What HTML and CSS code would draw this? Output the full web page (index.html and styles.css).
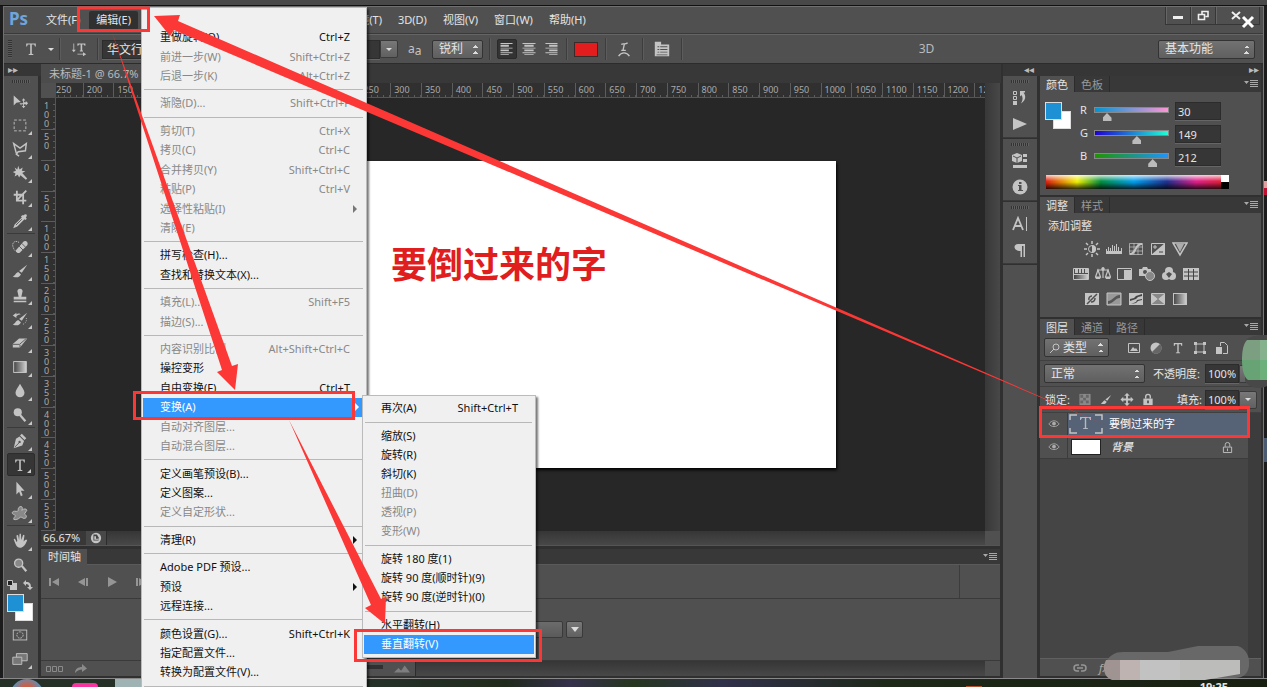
FILE: index.html
```html
<!DOCTYPE html>
<html lang="zh-CN">
<head>
<meta charset="utf-8">
<title>未标题-1 @ 66.7%</title>
<link rel="stylesheet" href="styles.css">
</head>
<body>
<svg class="defs" aria-hidden="true">
  <defs>
    <linearGradient id="fade"><stop offset="0" stop-color="#444"/><stop offset="1" stop-color="#d0d0d0"/></linearGradient>
    <symbol id="move" viewBox="0 0 20 20"><path d="M3 4v11l3-3 5-1z"/><path d="M14 7l2 2.500h-1.500v2h2v-1.500l2.500 2.500-2.500 2.500v-1.500h-2v2H16l-2 2.500-2-2.500h1.500v-2h-2V15L9.500 12.500h4v-3H12z"/></symbol>
    <symbol id="marquee" viewBox="0 0 20 20"><rect class="ln" x="3.500" y="4.500" width="13" height="12" stroke-dasharray="3 2"/></symbol>
    <symbol id="lasso" viewBox="0 0 20 20"><path class="ln" stroke-width="1.600" d="M6 15L3 4l7 5 7-5-1 8-8 1-2 3 3 2"/></symbol>
    <symbol id="wand" viewBox="0 0 20 20"><path d="M8 2l1.500 4L13 4l-1 3.500 4 .5-3.500 2L18 16l-1.500 1.500-6-5L9 15l-1.500-3L4 14l1-3.500L2 9l3.500-1.500L4 4l3 2z"/></symbol>
    <symbol id="crop" viewBox="0 0 20 20"><path class="ln" stroke-width="2" d="M6.500 3v11H17M3 7.500h10.500V18M6 14l11-11"/></symbol>
    <symbol id="dropper" viewBox="0 0 20 20"><path d="M11 5l1 1-8 8-1.500 4L7 16l8-8 1 1 1.500-1.500-1-1.500C19 4 17 1 14 3.500L12.500 3.500z"/><path stroke="#555" d="M5.500 14.500L12 8"/></symbol>
    <symbol id="heal" viewBox="0 0 20 20"><path class="ln" stroke-dasharray="1.500 1" d="M9 5C5 2 1 5 2 9s3 7 6 5"/><path d="M6 13l8-9c2-2 6 1 4 4l-8 8c-2 2-6-1-4-3z"/><path stroke="#555" stroke-width="1" d="M9 9l5 5M12 6l4 4"/></symbol>
    <symbol id="brush" viewBox="0 0 20 20"><path d="M18 3l-6 9-3-2zM8 11l3 2.500C10 17 6 18 2 16c3-1 3-4 6-5z"/></symbol>
    <symbol id="stamp" viewBox="0 0 20 20"><path d="M10 3a3 3 0 0 1 2.500 4.500L11.500 12H17v3H3v-3h5.500L7.500 7.500A3 3 0 0 1 10 3zM3 16.500h14V18H3z"/></symbol>
    <symbol id="history" viewBox="0 0 20 20"><path d="M18 3l-6 9-3-2zM8 11l3 2.500C10 17 6 18 2 16c3-1 3-4 6-5zM6 3v2c2-2 4-1 5 0-2 0-3 0-5 2v2L2 6z"/><path class="ln" stroke-dasharray="1 1.500" d="M17 9c1 4-2 7-5 7"/></symbol>
    <symbol id="eraser" viewBox="0 0 20 20"><path d="M9 5h9l-8 10H2v-4z"/><path stroke="#555" d="M2 11.500h7.500L17 5M10 12v3"/></symbol>
    <symbol id="gradient" viewBox="0 0 20 20"><rect x="3" y="4" width="14" height="12" fill="url(#fade)" stroke="#d0d0d0"/></symbol>
    <symbol id="drop" viewBox="0 0 20 20"><path d="M10 2c2 4 5 7 5 10a5 5 0 0 1-10 0c0-3 3-6 5-10z"/></symbol>
    <symbol id="dodge" viewBox="0 0 20 20"><circle cx="7.500" cy="7" r="4.500"/><path stroke="#c4c4c4" stroke-width="2.500" d="M10 10l6 7"/></symbol>
    <symbol id="pen" viewBox="0 0 20 20"><path d="M12 2l5 5-2 2-5-5zM9.500 5l5 5-2 5L3 18 5.500 7.500z"/><path stroke="#555" d="M4 17l5-5"/><circle cx="9.500" cy="11" r="1.300" fill="#555"/></symbol>
    <symbol id="type" viewBox="0 0 20 20"><path d="M4 3h12v4h-1l-1-2.500h-3V16l2 .5V17.500H7v-1l2-.5V4.500H6L5 7H4z"/></symbol>
    <symbol id="select" viewBox="0 0 20 20"><path d="M6 2v14l3-3 2 5 2-1-2-5h4z"/></symbol>
    <symbol id="shape" viewBox="0 0 20 20"><path d="M10 3c3-1 3 2 2 4 3-3 7-1 5 1l-2 3c3 2 3 5-1 5-2-1-3-2-4-1-2 2-5 3-7 2 0-3 3-3 1-5-4-1-3-4 0-4 3 0 3 1 4-1 0-2 0-3 2-4z" fill="#888" stroke="#c4c4c4"/></symbol>
    <symbol id="hand" viewBox="0 0 20 20"><path d="M3 8c1-1 2 0 3 3l1-1-1-6c1-1 2-1 2 0l1 5 .5-7h1.500l.5 7 2-6 1.500.5-1 7 2-2h2c-1 4-4 9-8 9S5 13 3 8z"/></symbol>
    <symbol id="lens" viewBox="0 0 20 20"><circle cx="8.500" cy="8" r="4.500" fill="#888" stroke="#c4c4c4" stroke-width="1.500"/><path stroke="#c4c4c4" stroke-width="2.500" d="M12 11l5 6"/></symbol>
    <symbol id="mask" viewBox="0 0 20 20"><rect class="ln" x="2.500" y="4.500" width="15" height="11"/><circle class="ln" cx="10" cy="10" r="3.500" stroke-dasharray="2 1"/></symbol>
    <symbol id="screen" viewBox="0 0 20 20"><path d="M6 4h12v8H6z" fill="#777" stroke="#c4c4c4"/><path d="M2 8h10v8H2z" fill="#777" stroke="#c4c4c4"/></symbol>
    <symbol id="panelmenu" viewBox="0 0 14 10"><path d="M0 2h5L2.500 5zM6 1h8v1H6zM6 3h8v1H6zM6 5h8v1H6zM6 7h8v1H6z"/></symbol>
    <symbol id="eye" viewBox="0 0 14 10"><path class="ln" d="M1 5c3-5 9-5 12 0-3 4-9 4-12 0z"/><circle cx="7" cy="4.500" r="2.200"/></symbol>
    <symbol id="lock" viewBox="0 0 12 14"><path class="ln" stroke-width="1.500" d="M3.500 6V4a2.500 2.500 0 0 1 5 0v2"/><path d="M1 6h10v7H1z"/><path fill="#555" d="M5 8h2v3H5z"/></symbol>
    <symbol id="tri" viewBox="0 0 6 8"><path d="M1 0l4 4-4 4z"/></symbol>
  </defs>
</svg>

<div class="page">
  <div class="backstrip"></div>
  <div class="app">
    <header class="menubar">
      <strong class="logo">Ps</strong>
      <nav class="menus">
        <button>文件(F)</button><button class="open">编辑(E)</button><button>图像(I)</button><button>图层(L)</button><button>文字(Y)</button><button>选择(S)</button><button>滤镜(T)</button><button>3D(D)</button><button>视图(V)</button><button>窗口(W)</button><button>帮助(H)</button>
      </nav>
      <div class="winctl">
        <button aria-label="最小化"><svg viewBox="0 0 12 12"><path d="M1 6h10v3H1z"/></svg></button>
        <button aria-label="还原"><svg viewBox="0 0 12 12"><path class="ln" stroke-width="1.600" d="M5 4V1.500h6v5H8.500M1.500 4.500h6v5h-6z"/></svg></button>
        <button class="close" aria-label="关闭"><svg viewBox="0 0 12 12"><path class="ln" stroke-width="2" d="M2 2l8 7M10 2L2 9"/></svg></button>
      </div>
    </header>

    <div class="options">
      <i class="grip-v"></i>
      <svg class="ic opt-t"><use href="#type"/></svg><i class="down"></i>
      <i class="vsep"></i>
      <svg class="ic opt-o" viewBox="0 0 20 20"><path d="M8 3h10v3h-1l-1-1.500h-2V12h1v1h-4v-1h1V4.500h-2L9 6H8zM3 3h1v8h2l-2.500 3L1 11h2zM8 16h7v-2l4 2.500-4 2.500v-2H8z"/></svg>
      <i class="vsep"></i>
      <input class="dark font" aria-label="字体" value="华文行楷">
      <input class="dark size" aria-label="字号" value="36 点"><button class="dropbtn" aria-label="字号列表"><i class="down"></i></button>
      <span class="aa">a<sub>a</sub></span>
      <select class="sel aasel" aria-label="消除锯齿"><option>锐利</option></select>
      <i class="vsep"></i>
      <button class="align on" aria-label="左对齐"><svg viewBox="0 0 14 14"><path d="M0 0h13v1H0zM0 2h9v2H0zM0 5h13v1H0zM0 7h9v2H0zM0 10h13v1H0zM0 12h9v1H0z"/></svg></button>
      <button class="align" aria-label="居中对齐"><svg viewBox="0 0 14 14"><path d="M0 0h14v1H0zM2 2h10v2H2zM0 5h14v1H0zM2 7h10v2H2zM0 10h14v1H0zM2 12h10v1H2z"/></svg></button>
      <button class="align" aria-label="右对齐"><svg viewBox="0 0 14 14"><path d="M1 0h13v1H1zM5 2h9v2H5zM1 5h13v1H1zM5 7h9v2H5zM1 10h13v1H1zM5 12h9v1H5z"/></svg></button>
      <i class="vsep"></i>
      <button class="redsw" aria-label="文本颜色"></button>
      <i class="vsep"></i>
      <svg class="ic opt-w" viewBox="0 0 20 20"><path class="ln" stroke-width="1.500" d="M7 5c2-2 4 1 7-2M10.500 4L9 11M7 11.500h5M4 18c3-5 9-5 12 0"/></svg>
      <i class="vsep"></i>
      <svg class="ic opt-p" viewBox="0 0 20 20"><path d="M2 2h7v3h9v13H2z"/><path fill="#505050" d="M10 2h8v2h-8zM5 7h2v1H5zM8 7h8v1H8zM5 10h2v1H5zM8 10h8v1H8zM5 13h2v1H5zM8 13h8v1H8zM4 16h12v1H4z"/></svg>
      <i class="vsep"></i>
      <span class="threed">3D</span>
      <select class="sel workspace" aria-label="工作区"><option>基本功能</option></select>
    </div>

    <main class="work">
      <aside class="tools">
        <div class="colhead"><b>▸▸</b></div>
        <i class="grip-h"></i>
        <div class="toolgroup">
          <button aria-label="移动"><svg><use href="#move"/></svg></button><button class="more" aria-label="选框"><svg><use href="#marquee"/></svg></button><button class="more" aria-label="套索"><svg><use href="#lasso"/></svg></button><button class="more" aria-label="魔棒"><svg><use href="#wand"/></svg></button><button class="more" aria-label="裁剪"><svg><use href="#crop"/></svg></button><button class="more" aria-label="吸管"><svg><use href="#dropper"/></svg></button>
        </div>
        <div class="toolgroup">
          <button class="more" aria-label="修复"><svg><use href="#heal"/></svg></button><button class="more" aria-label="画笔"><svg><use href="#brush"/></svg></button><button class="more" aria-label="图章"><svg><use href="#stamp"/></svg></button><button class="more" aria-label="历史画笔"><svg><use href="#history"/></svg></button><button class="more" aria-label="橡皮擦"><svg><use href="#eraser"/></svg></button><button class="more" aria-label="渐变"><svg><use href="#gradient"/></svg></button><button class="more" aria-label="模糊"><svg><use href="#drop"/></svg></button><button class="more" aria-label="减淡"><svg><use href="#dodge"/></svg></button>
        </div>
        <div class="toolgroup">
          <button class="more" aria-label="钢笔"><svg><use href="#pen"/></svg></button><button class="more active" aria-label="文字"><svg><use href="#type"/></svg></button><button class="more" aria-label="选择"><svg><use href="#select"/></svg></button><button class="more" aria-label="形状"><svg><use href="#shape"/></svg></button>
        </div>
        <div class="toolgroup last">
          <button class="more" aria-label="抓手"><svg><use href="#hand"/></svg></button><button aria-label="缩放"><svg><use href="#lens"/></svg></button>
        </div>
        <div class="mini">
          <svg viewBox="0 0 10 10"><path d="M3 3h7v7H3z"/><path d="M.5.500h5v5h-5z" fill="#222" stroke="#c4c4c4"/></svg>
          <svg viewBox="0 0 10 10"><path d="M0 3l3-3v2c4 0 5 2 5 5h2l-3 3-3-3h2C6 5 5 4 3 4v2z"/></svg>
        </div>
        <div class="swatches"><i class="bg"></i><i class="fg"></i></div>
        <div class="toolgroup last"><button aria-label="快速蒙版"><svg><use href="#mask"/></svg></button><button class="more" aria-label="屏幕模式"><svg><use href="#screen"/></svg></button></div>
      </aside>

      <section class="center">
        <div class="doctabs"><span>未标题-1 @ 66.7%</span></div>
        <div class="doc">
          <i class="corner"></i>
          <div class="hruler"><div class="hcells"><i>250</i><i>200</i><i>150</i><i>100</i><i>50</i><i>0</i><i>50</i><i>100</i><i>150</i><i>200</i><i>250</i><i>300</i><i>350</i><i>400</i><i>450</i><i>500</i><i>550</i><i>600</i><i>650</i><i>700</i><i>750</i><i>800</i><i>850</i><i>900</i><i>950</i><i>1000</i><i>1050</i><i>1100</i><i>1150</i><i>1200</i><i>1250</i></div></div>
          <i class="vscroll"></i>
          <div class="vruler"><i>100</i><i>50</i><i>0</i><i>50</i><i>100</i><i>150</i><i>200</i><i>250</i><i>300</i><i>350</i><i>400</i><i>450</i><i>500</i><i>550</i></div>
          <div class="stage"><div class="paper">要倒过来的字</div></div>
        </div>
        <div class="status"><span class="zoom">66.67%</span><svg viewBox="0 0 14 14"><circle cx="7" cy="7" r="6"/><path fill="#444" d="M4 3h4l2 3v4H4z"/><path d="M5 5h2v3h3v1H5z"/></svg><i class="track"></i><i class="end"></i></div>
        <div class="tlhead"><span>时间轴</span><svg class="pmenu"><use href="#panelmenu"/></svg></div>
        <div class="tlctl">
          <svg viewBox="0 0 12 10"><path d="M1 1h2v8H1zM11 1v8L4 5z"/></svg><svg viewBox="0 0 12 10"><path d="M9 1h2v8H9zM8 1v8L1 5z"/></svg><svg viewBox="0 0 12 10"><path d="M2 0v10l9-5z"/></svg><svg viewBox="0 0 12 10"><path d="M1 1h2v8H1zM4 1v8l7-4z"/></svg>
          <i></i>
        </div>
        <div class="tlbody"><button class="create" aria-label="创建时间轴"></button><button class="dropbtn" aria-label="时间轴类型"><i class="down"></i></button></div>
        <div class="tlfoot">
          <svg class="cells" viewBox="0 0 18 10"><path class="ln" d="M.5 2.500h4v5h-4zM6.500 2.500h4v5h-4zM12.500 2.500h4v5h-4z"/></svg>
          <svg class="share" viewBox="0 0 14 10"><path d="M1 9c0-4 3-6 7-6V0l5 4.500L8 8V5.500C5 5.500 3 7 1 9z"/></svg>
          <i class="zoomtrack"></i>
          <svg class="hills" viewBox="0 0 18 8"><path d="M0 8l5-5 3 3 4-6 6 8z"/></svg>
          <i class="track"></i><i class="end"></i>
        </div>
      </section>

      <aside class="dock">
        <div class="colhead right"><b>◂◂</b></div>
        <div class="dockgroup"><i class="grip-h"></i>
          <svg viewBox="0 0 16 16"><path class="ln" d="M1.500 1.500h3v3h-3zM1.500 6.500h3v3h-3z"/><path d="M1 11h4v4H1zM8 1h5v1.500h-1.500c3 4 2 8-2.500 11 2-4 2-6 .5-8.500L8 6.500z"/></svg>
          <svg viewBox="0 0 16 16"><path d="M1 2v12l14-6z"/></svg></div>
        <div class="dockgroup"><i class="grip-h"></i>
          <svg viewBox="0 0 16 16"><path d="M5 0l5 2v6l-5 2-5-2V2zM11 1h4v3h-4zM11 6h4v3h-4zM1 12h14v3H1z"/><path stroke="#505050" fill="none" d="M1 3l4 2 4-2M5 5v5"/></svg>
          <svg viewBox="0 0 16 16"><circle cx="8" cy="8" r="7.500"/><path fill="#505050" d="M7 3h2.500v2H7zM6 6h3.500v5H11v1H6v-1h1V7H6z"/></svg></div>
        <div class="dockgroup"><i class="grip-h"></i>
          <svg viewBox="0 0 16 16"><path class="ln" stroke-width="1.800" d="M1 14L6 2l5 12M3 10h6"/><path d="M14 1h1v14h-1z"/></svg>
          <svg viewBox="0 0 16 16"><path d="M6 2h7v13h-1.500V4H10v11H8.500V9C1 9 1 2 6 2z"/></svg></div>
        <div class="dockrest"></div>
      </aside>

      <aside class="panels">
        <div class="colhead right"><b>▸▸</b></div>
        <section class="panel">
          <div class="tabs"><button class="cur">颜色</button><button>色板</button><svg class="pmenu"><use href="#panelmenu"/></svg></div>
          <div class="color">
            <div class="swatches"><i class="bg"></i><i class="fg"></i></div>
            <div class="rgb">
              <label for="r">R</label><input class="range r" type="range" max="255" value="30" aria-label="R"><input class="dark num" id="r" value="30">
              <label for="g">G</label><input class="range g" type="range" max="255" value="149" aria-label="G"><input class="dark num" id="g" value="149">
              <label for="b">B</label><input class="range b" type="range" max="255" value="212" aria-label="B"><input class="dark num" id="b" value="212">
            </div>
          </div>
          <div class="spectrum"><i></i></div>
        </section>
        <section class="panel adjust">
          <div class="tabs"><button class="cur">调整</button><button>样式</button><svg class="pmenu"><use href="#panelmenu"/></svg></div>
          <p>添加调整</p>
          <div class="adjrow">
            <svg viewBox="0 0 16 16"><circle class="ln" cx="8" cy="8" r="3.500"/><path d="M8 4a4 4 0 0 1 0 8z"/><path class="ln" stroke-width="1.500" d="M8 0v3M8 13v3M0 8h3M13 8h3M2 2l2 2M12 12l2 2M14 2l-2 2M4 12l-2 2"/></svg>
            <svg viewBox="0 0 16 16"><path d="M0 13v-3h16v3z"/><path class="ln" d="M.5 11V8M2.500 11V6M4.500 11V7M6.500 11V4M8.500 11V5M10.500 11V3M12.500 11V6M15.500 11V7"/></svg>
            <svg viewBox="0 0 16 16"><path class="ln" d="M1.500 2.500h13v11h-13zM1 6h14M1 10h14M6 2v12M10 2v12" opacity=".7"/><path class="ln" stroke-width="2" d="M2 13c7 0 4-10 12-10"/></svg>
            <svg viewBox="0 0 16 16"><path class="ln" d="M1.500 2.500h13v11h-13z"/><path d="M15 2v12H1z"/><path class="ln" d="M3 6h4M5 4v4"/><path stroke="#444" d="M9 11h4"/></svg>
            <svg viewBox="0 0 16 16"><path class="ln" stroke-width="1.500" d="M1 2h14L8 14z"/><path d="M4 3h8l-4 8z" opacity=".8"/></svg>
          </div>
          <div class="adjrow">
            <svg viewBox="0 0 16 16"><path class="ln" d="M.5 2.500h15v11H.5z"/><path d="M2 3h3v4H2zM6 3h2v4H6zM9 3h2v4H9zM12 3h3v4h-3zM1 8h14v1H1z"/><path fill="url(#fade)" d="M1 9h14v4H1z"/></svg>
            <svg viewBox="0 0 16 16"><path class="ln" stroke-width="1.200" d="M8 1v11M2 4h12M3 4L.5 11h5zM13 4l-2.500 7h5z"/><circle cx="8" cy="3" r="1.800"/><path d="M0 11h6l-1 2H1zM10 11h6l-1 2h-4z"/></svg>
            <svg viewBox="0 0 16 16"><path class="ln" d="M.5 2.500h14v11H.5z"/><path d="M7 4h7v9H7z"/></svg>
            <svg viewBox="0 0 16 16"><path d="M0 3h3l1-2h4l1 2h3v7H0z"/><circle cx="6" cy="6" r="2" fill="#505050"/><circle cx="11" cy="10" r="4.500" fill="#888" stroke="#c4c4c4"/></svg>
            <svg viewBox="0 0 16 16"><circle cx="8" cy="5" r="4"/><circle cx="5" cy="10" r="4"/><circle cx="11" cy="10" r="4"/><path fill="#505050" d="M5 8l3-2 3 2-3 4z"/></svg>
            <svg viewBox="0 0 16 16"><path d="M0 2h16v12H0z"/><path stroke="#444" d="M1 6h14M1 10h14M5.500 3v11M10.500 3v11"/></svg>
          </div>
          <div class="adjrow">
            <svg viewBox="0 0 16 16"><path d="M1 2h14v12H1z"/><path stroke="#505050" stroke-width="1.500" fill="none" d="M3 13L13 3M8 5a3 3 0 0 0-3 4M11 7c0 4-3 4-4 4"/></svg>
            <svg viewBox="0 0 16 16"><path d="M1 2h14v12H1z" fill="#999" stroke="#c4c4c4"/><path fill="#555" d="M2 10c5 0 6-6 12-6v3c-5 0-6 5-12 6z"/></svg>
            <svg viewBox="0 0 16 16"><path d="M1 2h14v12H1z"/><path fill="#444" d="M2 8l4-1 2-2 6-2v2l-4 1-2 2-6 2zM3 13l5-2 1-2 5-1v1l-4 1-2 2z"/></svg>
            <svg viewBox="0 0 16 16"><path class="ln" d="M1.500 2.500h13v11h-13z"/><path d="M2 3h12L8 8zM2 13l6-5 6 5z" fill="#888"/><path d="M2 3l6 5-6 5zM14 3L8 8l6 5z"/></svg>
            <svg viewBox="0 0 16 16"><rect x="1.500" y="2.500" width="13" height="11" fill="url(#fade)" stroke="#c4c4c4"/></svg>
          </div>
        </section>
        <section class="panel layers">
          <div class="tabs"><button class="cur">图层</button><button>通道</button><button>路径</button><svg class="pmenu"><use href="#panelmenu"/></svg></div>
          <div class="lrow filter">
            <div class="kind"><svg viewBox="0 0 12 12"><circle class="ln" cx="7" cy="5" r="3"/><path class="ln" d="M5 7l-4 4"/></svg><select class="sel" aria-label="类型"><option>类型</option></select></div>
            <svg viewBox="0 0 14 14"><path class="ln" d="M1.500 2.500h11v9h-11z"/><path d="M3 10l3-4 2 2 1-1 2 3z"/></svg>
            <svg viewBox="0 0 14 14"><circle cx="7" cy="7" r="5.500"/><path fill="#666" d="M3 11A5.500 5.500 0 0 0 11 3z"/></svg>
            <svg><use href="#type"/></svg>
            <svg viewBox="0 0 14 14"><path class="ln" d="M3 3h8v8H3z"/><path d="M1 1h3v3H1zM10 1h3v3h-3zM1 10h3v3H1zM10 10h3v3h-3z"/></svg>
            <svg viewBox="0 0 14 14"><path class="ln" d="M5.500 5V1.500h4l3 3v8H8"/><path d="M1 6h6v7H1z"/></svg>
          </div>
          <div class="lrow"><select class="sel mode" aria-label="混合模式"><option>正常</option></select><label for="op">不透明度:</label><input class="dark pct" id="op" value="100%"><button class="dropbtn" aria-label="不透明度滑块"><i class="down"></i></button></div>
          <div class="lrow locks"><span>锁定:</span>
            <svg viewBox="0 0 14 14"><path opacity=".5" d="M1 1h12v12H1z"/><path fill="#666" d="M2 2h3v3H2zM8 2h3v3H8zM5 5h3v3H5zM2 8h3v3H2zM8 8h3v3H8z"/></svg>
            <svg viewBox="0 0 20 20"><use href="#brush"/></svg>
            <svg viewBox="0 0 14 14"><path d="M7 0l3 3H8v3h3V4l3 3-3 3V8H8v3h2l-3 3-3-3h2V8H3v2L0 7l3-3v2h3V3H4z"/></svg>
            <svg><use href="#lock"/></svg>
            <label for="fill">填充:</label><input class="dark pct" id="fill" value="100%"><button class="dropbtn" aria-label="填充滑块"><i class="down"></i></button></div>
          <div class="layerlist">
            <div class="layer sel-layer"><span class="eye"><svg><use href="#eye"/></svg></span><svg class="tthumb" viewBox="0 0 34 20"><path class="ln" stroke-width="1.500" d="M1 6V1h7M26 1h7v5M1 14v5h7M26 19h7v-5"/><path d="M11 3h11v3h-.8L20 4h-2.800v10l1.800.3V15h-5v-.7l1.800-.3V4H13l-1.200 2H11z"/></svg><b>要倒过来的字</b></div>
            <div class="layer"><span class="eye"><svg><use href="#eye"/></svg></span><i class="thumb"></i><em>背景</em><svg class="lk" viewBox="0 0 12 14"><path class="ln" d="M3.500 6V4a2.500 2.500 0 0 1 5 0v2M1.500 6.500h9v6h-9zM6 8v3"/></svg></div>
          </div>
          <div class="lfoot"><svg viewBox="0 0 14 10"><path class="ln" stroke-width="1.500" d="M6 2H4a3 3 0 0 0 0 6h2M8 2h2a3 3 0 0 1 0 6H8M4 5h6"/></svg><em>fx</em></div>
        </section>
      </aside>
    </main>
  </div>
  <footer class="taskbar"><i class="orb"></i><i class="pink"></i><i class="aero"></i><i class="tray"></i><span>19:25</span></footer>

  <ul class="menu">
    <li class="off"><span></span></li>
    <li><span>重做旋转(O)</span><kbd>Ctrl+Z</kbd></li>
    <li class="off"><span>前进一步(W)</span><kbd>Shift+Ctrl+Z</kbd></li>
    <li class="off"><span>后退一步(K)</span><kbd>Alt+Ctrl+Z</kbd></li>
    <li class="sep"></li>
    <li class="off"><span>渐隐(D)...</span><kbd>Shift+Ctrl+F</kbd></li>
    <li class="sep"></li>
    <li class="off"><span>剪切(T)</span><kbd>Ctrl+X</kbd></li>
    <li class="off"><span>拷贝(C)</span><kbd>Ctrl+C</kbd></li>
    <li class="off"><span>合并拷贝(Y)</span><kbd>Shift+Ctrl+C</kbd></li>
    <li class="off"><span>粘贴(P)</span><kbd>Ctrl+V</kbd></li>
    <li class="off"><span>选择性粘贴(I)</span><svg><use href="#tri"/></svg></li>
    <li class="off"><span>清除(E)</span></li>
    <li class="sep"></li>
    <li><span>拼写检查(H)...</span></li>
    <li><span>查找和替换文本(X)...</span></li>
    <li class="sep"></li>
    <li class="off"><span>填充(L)...</span><kbd>Shift+F5</kbd></li>
    <li class="off"><span>描边(S)...</span></li>
    <li class="sep"></li>
    <li class="off"><span>内容识别比例</span><kbd>Alt+Shift+Ctrl+C</kbd></li>
    <li><span>操控变形</span></li>
    <li><span>自由变换(F)</span><kbd>Ctrl+T</kbd></li>
    <li class="hot"><span>变换(A)</span><svg><use href="#tri"/></svg>
      <ul class="submenu">
        <li><span>再次(A)</span><kbd>Shift+Ctrl+T</kbd></li>
        <li class="sep"></li>
        <li><span>缩放(S)</span></li>
        <li><span>旋转(R)</span></li>
        <li><span>斜切(K)</span></li>
        <li class="off"><span>扭曲(D)</span></li>
        <li class="off"><span>透视(P)</span></li>
        <li class="off"><span>变形(W)</span></li>
        <li class="sep"></li>
        <li><span>旋转 180 度(1)</span></li>
        <li><span>旋转 90 度(顺时针)(9)</span></li>
        <li><span>旋转 90 度(逆时针)(0)</span></li>
        <li class="sep"></li>
        <li><span>水平翻转(H)</span></li>
        <li class="hot"><span>垂直翻转(V)</span></li>
      </ul>
    </li>
    <li class="off"><span>自动对齐图层...</span></li>
    <li class="off"><span>自动混合图层...</span></li>
    <li class="sep"></li>
    <li><span>定义画笔预设(B)...</span></li>
    <li><span>定义图案...</span></li>
    <li class="off"><span>定义自定形状...</span></li>
    <li class="sep"></li>
    <li><span>清理(R)</span><svg><use href="#tri"/></svg></li>
    <li class="sep"></li>
    <li><span>Adobe PDF 预设...</span></li>
    <li><span>预设</span><svg><use href="#tri"/></svg></li>
    <li><span>远程连接...</span></li>
    <li class="sep"></li>
    <li><span>颜色设置(G)...</span><kbd>Shift+Ctrl+K</kbd></li>
    <li><span>指定配置文件...</span></li>
    <li><span>转换为配置文件(V)...</span></li>
    <li class="sep"></li>
  </ul>

  <svg class="notes" viewBox="0 0 1267 687" aria-hidden="true">
    <path fill="#484848" d="M1246 340c6-5 14-5 21-5v51c-8 4-18 2-22-5z"/>
    <path fill="#7c9f82" d="M1247 340h13v20h-18c0-8 1-16 5-20z"/><path fill="#85b28c" d="M1260 340h7v20h-7z"/>
    <path fill="#68a375" d="M1242 360h18v20h-12c-4-3-6-10-6-20z"/><path fill="#6cb07c" d="M1260 360h7v20h-7z"/>
    <path fill="#686868" d="M1105 664c4-9 10-12 18-12h45l30-6h40c8 3 12 10 11 20-1 8-6 12-14 12h-40z"/>
    <path fill="#a09492" d="M1104 665l2-5h14v20h-8c-6-2-9-8-8-15z"/>
    <path fill="#bfb3b1" d="M1120 660h20v20h-20z"/><path fill="#c2c2c2" d="M1140 660h40v20h-40z"/>
    <path fill="#bcbcbb" d="M1180 660h60v14l-35 6h-25z"/>
    <path stroke="#fff" stroke-width="3" d="M1243 17l10 10M1253 17l-10 10"/>
    <path fill="#e0a0a0" d="M1264 181h3v7h-3z"/><path fill="#c01030" d="M1264 188h3v7h-3z"/><path fill="#4a5a70" d="M1264 438h3v24h-3z"/>
    <g fill="#fc3836">
      <path d="M154 16l26-1-2 6 930 405L174 30l-4 6z"/>
      <path d="M112 32l120 334 6-2-3 26-18-18 5-2z"/>
      <path d="M289 420l92 179 5-2-1 27-20-16 6-3z"/>
    </g>
    <g fill="none" stroke="#fc3836" stroke-width="3">
      <path d="M78.500 8h70v22.500h-70zM134.500 392.500h219v26h-219zM355.500 630.500h185v30h-185zM1040.500 407.500h208v29h-208z"/>
    </g>
  </svg>
</div>
</body>
</html>
```
FILE: styles.css
```css
* { box-sizing: border-box; }
body {
  margin: 0;
  background: #1c1c1c;
  color: #e4e4e4;
  font: 11px/16px "Noto Sans", "Noto Sans CJK SC", sans-serif;
}
button, input, select { font: inherit; color: inherit; margin: 0; padding: 0; border: 0; background: none; min-width: 0; }
i, em { display: block; }
ul { list-style: none; margin: 0; padding: 0; }
p { margin: 0; }
svg { display: block; fill: #c4c4c4; flex: none; }
.ln { fill: none; stroke: #c4c4c4; }
.defs { position: absolute; width: 0; height: 0; }

.page { position: relative; display: flex; flex-direction: column; height: 100vh; overflow: hidden; }
.backstrip { flex: none; height: 6px; background: #484848; border-bottom: 1px solid #111; }
.app { flex: 1; min-height: 0; display: flex; flex-direction: column; margin: 0 4px; background: #303030; border-top: 1px solid #707070; box-shadow: -1px 0 #707070, 1px 0 #777; }

.menubar { flex: none; display: flex; height: 27px; background: #505050; border-bottom: 1px solid #3a3a3a; padding-left: 5px; }
.logo { width: 30px; font: bold 17px/24px "Noto Sans", sans-serif; color: #6fa5da; }
.menus { display: flex; flex: 1; align-items: center; }
.menus button { height: 19px; padding: 0 7px; margin-right: 2px; white-space: nowrap; }
.menus .open { background: #303030; border-radius: 2px; }
.winctl { display: flex; align-items: flex-start; margin-right: 4px; }
.winctl button { width: 26px; height: 18px; border: 1px solid #363636; border-top: 0; display: grid; place-items: center; margin-right: -1px; box-shadow: inset 1px 0 #666; }
.winctl .close { width: 45px; padding-right: 4px; }
.winctl svg { width: 12px; height: 12px; fill: #eee; }
.winctl .ln { fill: none; stroke: #eee; }

.options { flex: none; display: flex; align-items: center; height: 30px; background: #505050; border-top: 1px solid #656565; border-bottom: 1px solid #2c2c2c; padding: 0 8px 0 4px; }
.grip-v { width: 4px; height: 18px; background: repeating-linear-gradient(#333 0 1px, #5a5a5a 1px 2px); }
.ic { width: 16px; height: 16px; }
.down { width: 0; height: 0; border: 3px solid transparent; border-top: 3px solid #ddd; border-bottom: 0; }
.vsep { width: 2px; height: 22px; background: #3d3d3d; border-right: 1px solid #5c5c5c; }
.opt-t { margin: 0 9px 0 11px; }
.opt-t + .down { margin-right: 5px; }
.opt-o { margin: 0 10px; }
.dark { background: #363636; border: 1px solid #2c2c2c; height: 19px; padding: 0 4px; box-shadow: 0 1px #666; }
.font { width: 148px; margin-left: 3px; font-size: 12px; }
.size { width: 126px; margin-left: 4px; }
.dropbtn { width: 18px; height: 18px; display: grid; place-items: center; background: linear-gradient(#787878, #606060); border: 1px solid #3a3a3a; border-radius: 0 2px 2px 0; }
.aa { width: 34px; padding-left: 10px; font: 12px/16px "Noto Sans", sans-serif; color: #c4c4c4; }
.aa sub { font-size: 12px; line-height: 0; vertical-align: -2px; }
.sel { appearance: none; height: 19px; padding: 0 6px; border: 1px solid #333; border-radius: 2px; font-size: 12px; line-height: 16px;
  background:
    conic-gradient(from 135deg at 50% 0, #ddd 90deg, transparent 0) right 4px bottom 4px / 6px 3px no-repeat,
    conic-gradient(from 135deg at 50% 0, #ddd 90deg, transparent 0) right 4px top 4px / 6px 3px no-repeat,
    linear-gradient(#727272, #5f5f5f); }
.aasel { width: 51px; margin-right: 6px; }
.align { width: 20px; height: 20px; display: grid; place-items: center; margin-right: 2px; }
.aasel + .vsep { margin-right: 6px; }
.align.on { background: #333; border: 1px solid #2a2a2a; border-radius: 2px; }
.align svg { width: 14px; height: 13px; }
.align + .vsep { margin-left: 3px; }
.redsw { width: 24px; height: 15px; margin: 0 7px 0 6px; background: #e31d1d; border: 1px solid #3a2a2a; }
.opt-w { width: 18px; height: 18px; margin: 0 9px 0 8px; }
.opt-p { width: 18px; height: 18px; margin: 0 10px 0 9px; }
.threed { margin: 0 auto; padding-left: 12px; font-size: 12px; color: #bbb; }
.workspace { width: 97px; }

.work { flex: 1; min-height: 0; display: grid; grid-template-columns: 34px minmax(0, 1fr) 34px 221px; column-gap: 3px; padding-right: 2px; }
.colhead { flex: none; height: 12px; margin: 0 -3px 0 0; padding: 0 4px; background: #363636; font: 10px/12px "DejaVu Sans", sans-serif; color: #bbb; }
.colhead b { font-weight: normal; }
.colhead.right { text-align: right; padding-right: 6px; }
.panels .colhead { margin-right: 0; padding-right: 2px; }
.grip-h { width: 18px; height: 3px; margin: 4px auto 0; background: repeating-linear-gradient(90deg, #333 0 1px, #606060 1px 2px); }

.tools { display: flex; flex-direction: column; background: #505050; }
.tools .grip-h { flex: none; margin-bottom: 6px; }
.toolgroup { display: flex; flex-direction: column; border-bottom: 1px solid #3a3a3a; margin: 0 3px 1px; }
.toolgroup.last { border: 0; margin-top: 2px; margin-bottom: 0; }
.toolgroup button { position: relative; height: 24px; display: grid; place-items: center; }
.toolgroup svg { width: 18px; height: 18px; margin-right: 3px; }
.more::after { content: ""; position: absolute; right: 3px; bottom: 2px; border: 2px solid #c8c8c8; border-top-color: transparent; border-left-color: transparent; }
.toolgroup .active { background: #363636; border: 1px solid #2c2c2c; border-radius: 2px; height: 23px; margin-bottom: 1px; }
.toolgroup .active svg { width: 16px; height: 16px; }
.mini { display: flex; justify-content: space-between; padding: 3px 5px 4px 3px; }
.mini svg { width: 10px; height: 10px; }
.swatches { display: grid; grid-template-columns: 8px 9px 9px; grid-template-rows: 9px 9px 9px; }
.swatches i { border: 1px solid #ddd; }
.swatches .bg { grid-area: 2 / 2 / 4 / 4; background: #fff; }
.swatches .fg { grid-area: 1 / 1 / 3 / 3; background: #1e90d4; }
.tools .swatches { margin: 0 3px; }

.center { display: flex; flex-direction: column; min-width: 0; min-height: 0; }
.doctabs { flex: none; height: 19px; background: #383838; margin-right: -1px; }
.doctabs span { display: inline-block; padding: 2px 8px 1px; background: #4c4c4c; color: #bbb; }
.doc { flex: 1; min-height: 0; display: grid; grid-template: 15px minmax(0, 1fr) / 15px minmax(0, 1fr) 15px; }
.corner { background: #505050; }
.hruler { overflow: hidden; background: #303030; border-bottom: 1px solid #555; }
.hcells { display: grid; grid-template-columns: repeat(31, 1fr); margin: 0 -20px 0 -4px; height: 100%; }
.hcells i { border-left: 1px solid #5c5c5c; padding-left: 3px; font: 9px/13px "Noto Sans", sans-serif; color: #aaa;
  background: repeating-linear-gradient(90deg, transparent 0 5px, #5c5c5c 5px 6px) bottom / 100% 2px no-repeat; }
.vscroll { grid-row: 1 / 3; grid-column: 3; background: linear-gradient(90deg, #383838, #484848); }
.vruler { grid-row: 2; grid-column: 1; display: grid; grid-template-rows: repeat(14, 1fr); min-height: 0; padding-top: 1px; background: #303030; border-right: 1px solid #555; }
.vruler i { border-bottom: 1px solid #5c5c5c; min-height: 0; padding: 2px 4px 0 3px; word-break: break-all; font: 9px/9px "Noto Sans", sans-serif; color: #aaa;
  background: repeating-linear-gradient(transparent 0 5px, #5c5c5c 5px 6px) right / 2px 100% no-repeat; }
.stage { grid-row: 2; grid-column: 2; display: flex; background: #272727; padding: 63px 149px 63px 119px; }
.paper { flex: 1; background: #fff; padding: 75px 0 0 216px; font: bold 36px/52px "Noto Sans CJK SC", sans-serif; color: #e01e1e; white-space: nowrap; box-shadow: 1px 2px 3px #000; }
.status { flex: none; display: flex; align-items: center; height: 15px; background: #484848; border-bottom: 1px solid #555; }
.zoom { width: 45px; height: 14px; line-height: 14px; padding-left: 2px; background: #383838; }
.status svg { width: 12px; height: 12px; margin: 0 4px; }
.track { flex: 1; align-self: stretch; background: linear-gradient(#363636, #484848); border-left: 1px solid #2c2c2c; }
.end { width: 15px; align-self: stretch; background: #505050; }
.tlhead { flex: none; display: flex; justify-content: space-between; align-items: center; height: 16px; margin-top: 3px; background: #383838; border-bottom: 1px solid #5a5a5a; }
.tlhead span { height: 16px; padding: 0 6px 0 7px; background: #505050; }
.pmenu { width: 14px; height: 10px; margin-right: 3px; opacity: .8; }
.tlctl { flex: none; display: flex; align-items: center; gap: 17px; height: 34px; padding-left: 7px; background: #505050; border-bottom: 1px solid #3a3a3a; }
.tlctl svg { width: 12px; height: 10px; opacity: .6; }
.tlctl i { margin-left: auto; width: 41px; align-self: stretch; border-left: 1px solid #3c3c3c; }
.tlbody { flex: none; display: flex; gap: 3px; height: 61px; padding: 22px 0 0 400px; background: #505050; }
.create { width: 122px; height: 17px; background: linear-gradient(#6c6c6c, #5a5a5a); border: 1px solid #3a3a3a; border-radius: 2px; }
.tlbody .dropbtn { width: 17px; height: 17px; border-radius: 2px; }
.tlbody .down { border-width: 5px 4px 0; }
.tlfoot { flex: none; display: flex; align-items: center; height: 16px; margin-bottom: 2px; background: #505050; border-top: 1px solid #3a3a3a; padding-left: 5px; }
.cells { width: 18px; height: 10px; opacity: .5; margin-right: 10px; }
.share { width: 14px; height: 10px; opacity: .5; }
.zoomtrack { width: 75px; height: 4px; background: #303030; margin: 0 11px 4px 220px; }
.hills { width: 16px; height: 8px; opacity: .4; margin-right: 5px; }

.dock { display: flex; flex-direction: column; }
.dockgroup { flex: none; height: 62px; margin-bottom: 1px; background: #505050; border-bottom: 1px solid #3a3a3a; display: flex; flex-direction: column; align-items: center; gap: 7px; }
.dockgroup svg { width: 16px; height: 16px; }
.dockgroup svg + svg { margin-top: 3px; }
.dockrest { flex: 1; background: #505050; }

.panels { display: flex; flex-direction: column; min-height: 0; }
.panel { background: #505050; margin-bottom: 2px; }
.tabs { display: flex; align-items: center; height: 16px; background: #383838; }
.tabs button { height: 16px; padding: 0 6px; border-right: 1px solid #2c2c2c; color: #999; line-height: 15px; }
.tabs .cur { background: #505050; color: #e4e4e4; }
.tabs .pmenu { margin-left: auto; }
.color { display: flex; gap: 9px; padding: 10px 40px 0 5px; }
.rgb { flex: 1; display: grid; grid-template-columns: 14px minmax(0, 1fr) 46px; gap: 5px 0; align-items: center; }
.rgb label { line-height: 14px; padding-bottom: 3px; }
.num { width: 46px; height: 18px; padding: 0 2px; }
.range { appearance: none; width: auto; margin: 0 6px 0 0; height: 15px; align-self: start; padding-top: 1px; }
.range::-webkit-slider-runnable-track { height: 6px; border: 1px solid #888; }
.range::-webkit-slider-thumb { appearance: none; width: 9px; height: 8px; margin-top: 5px; background: #bbb; clip-path: polygon(50% 0, 100% 60%, 100% 100%, 0 100%, 0 60%); }
.r::-webkit-slider-runnable-track { background: linear-gradient(90deg, #0095d4, #ff95d4); }
.g::-webkit-slider-runnable-track { background: linear-gradient(90deg, #1e00d4, #1effd4); }
.b::-webkit-slider-runnable-track { background: linear-gradient(90deg, #1e9500, #1e95ff); }
.spectrum { display: flex; justify-content: flex-end; height: 14px; margin: 9px 32px 0 6px;
  background: linear-gradient(#fffc, #fff0 45%, #0000 50%, #000c), linear-gradient(90deg, #e02010, #f0f000 17%, #009040 30%, #00a0f0 48%, #203090 66%, #e0208a 82%, #e02020); }
.spectrum i { width: 8px; background: linear-gradient(#fff 50%, #000 50%); }
.panel:nth-of-type(1) { padding-bottom: 6px; }
.adjust { padding-bottom: 1px; }
.adjust p { padding: 5px 8px 7px; }
.adjrow { display: flex; justify-content: center; gap: 6px; padding-right: 30px; margin-bottom: 9px; }
.adjrow svg { width: 16px; height: 16px; }
.layers { flex: 1; min-height: 0; margin: 0 0 2px; display: flex; flex-direction: column; }
.layers .tabs { flex: none; }
.lrow { flex: none; display: flex; align-items: center; height: 26px; padding: 0 2px 0 4px; border-bottom: 1px solid #404040; }
.lrow > svg { width: 14px; height: 14px; margin-right: 8px; }
.kind { position: relative; margin-right: 18px; }
.kind .sel { width: 65px; padding-left: 18px; }
.kind svg { position: absolute; left: 5px; top: 4px; width: 12px; height: 12px; }
.mode { width: 101px; margin-right: 8px; }
.lrow label, .lrow span { white-space: nowrap; }
.pct { width: 34px; padding: 0 2px; margin-left: auto; font-size: 11px; }
.lrow .dropbtn { margin-right: 2px; }
.locks span { margin-right: 8px; margin-left: 1px; }
.locks > svg { margin-right: 7px; width: 14px; height: 13px; }
.locks label { margin-left: 15px; }
.layerlist { flex: 1; min-height: 0; background: #454545; border-right: 13px solid #3c3c3c; }
.layer { display: flex; align-items: center; height: 23px; background: #505050; border-bottom: 1px solid #3c3c3c; padding-right: 15px; }
.sel-layer { background: #566275; }
.layer b { font-weight: normal; color: #fff; margin-left: 6px; }
.layer em { margin-left: 10px; font-style: italic; font-weight: 500; }
.eye { width: 28px; align-self: stretch; display: grid; place-items: center; background: #505050; border-right: 1px solid #3c3c3c; }
.eye svg { width: 12px; height: 10px; opacity: .8; }
.tthumb { width: 34px; height: 20px; margin-left: 1px; fill: #b4bac4; }
.thumb { width: 30px; height: 16px; background: #fff; border: 1px solid #222; margin-left: 3px; }
.lk { width: 11px; height: 13px; margin-left: auto; }
.lfoot { flex: none; display: flex; align-items: center; gap: 12px; height: 18px; padding-left: 33px; border-top: 1px solid #606060; color: #aaa; }
.lfoot svg { width: 14px; height: 10px; opacity: .6; }

.taskbar { flex: none; display: flex; align-items: flex-start; height: 9px; overflow: hidden; border-top: 1px solid #888; background: linear-gradient(90deg, #253027 0 30%, #202a1c 40%, #35304c 45%, #26361f 50%, #30304a 57%, #1d2818 70%, #182012); }
.orb { width: 34px; height: 34px; margin-left: 10px; border-radius: 50%; background: radial-gradient(circle at 50% 35%, #c9604a 20%, #5e8fb5 50%, #a9c7dd); }
.pink { width: 26px; height: 20px; margin: 4px 17px 0 28px; border-radius: 4px; background: #f534a0; }
.aero { width: 30px; height: 20px; background: #9fb3b4; }
.tray { width: 16px; height: 8px; margin: 7px 218px 0 auto; background: #b5502f; }
.taskbar span { margin-right: 39px; font: bold 11px/13px "Noto Sans", sans-serif; margin-top: 1px; }

.menu, .submenu { display: flex; flex-direction: column; position: absolute; background: #f0f0f0; color: #111; border: 1px solid #bbb; box-shadow: 2px 2px 2px #0008; }
.menu { left: 141px; top: 7px; bottom: -3px; width: 226px; border-bottom: 0; }
.menu li { position: relative; flex: 1 1 19px; min-height: 0; display: flex; align-items: center; padding: 0 13px 0 17px; margin: 0 3px 0 1px; white-space: nowrap; }
.menu .sep { flex: 0 0 8px; padding: 0; margin: 0 3px 0 2px; }
.menu .sep::after { content: ""; flex: 1; border-top: 1px solid #b8b8b8; }
.menu .off { color: #888; }
.menu .hot { background: #3399ff; color: #fff; margin-right: 1px; }
.menu kbd { margin-left: auto; font: inherit; }
.menu li > svg { position: absolute; right: 5px; width: 6px; height: 8px; fill: #111; }
.menu .off > svg { fill: #777; }
.menu .hot > svg { fill: #fff; }
.submenu { left: 219px; top: -3px; width: 174px; padding: 3px 0; }
.menu .submenu li { flex: none; height: 19px; padding-left: 17px; margin-right: 1px; padding-right: 16px; }
.menu .submenu .sep { height: 9px; padding: 0; margin-right: 3px; }
.submenu li:not(.off):not(.hot) { color: #111; }

.notes { position: absolute; inset: 0; width: 100%; height: 100%; fill: none; pointer-events: none; }
```
